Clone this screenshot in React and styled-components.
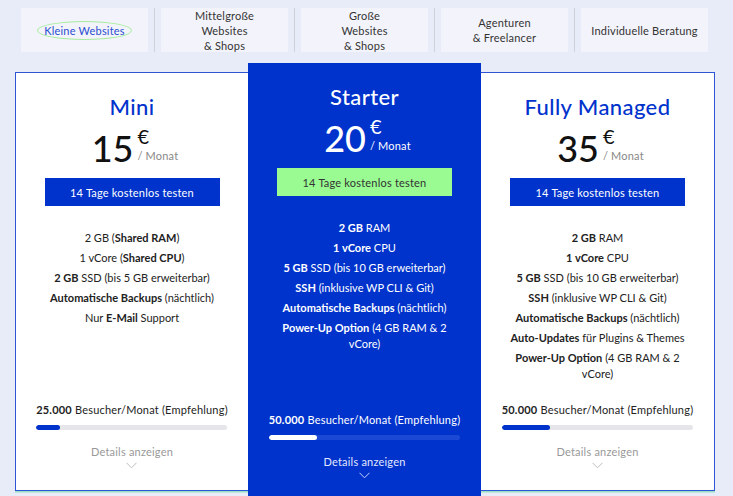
import React from "react";
import styled, { createGlobalStyle } from "styled-components";

const GlobalStyle = createGlobalStyle`
  html, body {
    margin: 0;
    padding: 0;
    background: #e8ebf8;
    font-family: Lato, "Open Sans", sans-serif;
    color: #222;
    overflow: hidden;
  }
`;

const tabs = [
  { label: ["Kleine Websites"], active: true },
  { label: ["Mittelgroße", "Websites", "& Shops"] },
  { label: ["Große", "Websites", "& Shops"] },
  { label: ["Agenturen", "& Freelancer"] },
  { label: ["Individuelle Beratung"] },
];

const plans = [
  {
    name: "Mini",
    price: "15",
    features: [
      ["2 GB ", ["(", "Shared RAM", ")"]],
      ["1 vCore ", ["(", "Shared CPU", ")"]],
      [["2 GB"], " SSD (bis 5 GB erweiterbar)"],
      [["Automatische Backups"], " (nächtlich)"],
      ["Nur ", ["E-Mail"], " Support"],
    ],
    visitors: "25.000",
    fill: 12.5,
  },
  {
    name: "Starter",
    price: "20",
    featured: true,
    features: [
      [["2 GB"], " RAM"],
      [["1 vCore"], " CPU"],
      [["5 GB"], " SSD (bis 10 GB erweiterbar)"],
      [["SSH"], " (inklusive WP CLI & Git)"],
      [["Automatische Backups"], " (nächtlich)"],
      [["Power-Up Option"], " (4 GB RAM & 2 vCore)"],
    ],
    visitors: "50.000",
    fill: 25,
  },
  {
    name: "Fully Managed",
    price: "35",
    features: [
      [["2 GB"], " RAM"],
      [["1 vCore"], " CPU"],
      [["5 GB"], " SSD (bis 10 GB erweiterbar)"],
      [["SSH"], " (inklusive WP CLI & Git)"],
      [["Automatische Backups"], " (nächtlich)"],
      [["Auto-Updates"], " für Plugins & Themes"],
      [["Power-Up Option"], " (4 GB RAM & 2 vCore)"],
    ],
    visitors: "50.000",
    fill: 25,
  },
];

// strings are normal text, arrays are bold (a 3-array keeps its parens unbolded)
function renderFeature(parts) {
  return parts.map((p, i) => {
    if (typeof p === "string") return <span key={i}>{p}</span>;
    if (p.length === 3)
      return (
        <span key={i}>
          {p[0]}
          <b>{p[1]}</b>
          {p[2]}
        </span>
      );
    return <b key={i}>{p[0]}</b>;
  });
}

export default function App() {
  return (
    <Page>
      <GlobalStyle />
      <TabBar>
        {tabs.map((t, i) => (
          <React.Fragment key={i}>
            {i > 0 && <TabDivider />}
            <Tab>
              <TabLabel active={t.active}>
                {t.label.map((l, j) => (
                  <span key={j}>{l}</span>
                ))}
              </TabLabel>
            </Tab>
          </React.Fragment>
        ))}
      </TabBar>

      <PlanBox>
        {plans.map((p) => (
          <Plan key={p.name} featured={p.featured}>
            <PlanName featured={p.featured}>{p.name}</PlanName>
            <PriceRow>
              <Amount featured={p.featured}>{p.price}</Amount>
              <PriceSide>
                <Euro featured={p.featured}>€</Euro>
                <PerMonth featured={p.featured}>/ Monat</PerMonth>
              </PriceSide>
            </PriceRow>
            <TrialButton featured={p.featured}>14 Tage kostenlos testen</TrialButton>
            <Features featured={p.featured}>
              {p.features.map((f, i) => (
                <li key={i}>{renderFeature(f)}</li>
              ))}
            </Features>
            <Footer>
              <Visitors featured={p.featured}>
                <b>{p.visitors}</b> Besucher/Monat (Empfehlung)
              </Visitors>
              <Track featured={p.featured}>
                <Fill featured={p.featured} style={{ width: `${p.fill}%` }} />
              </Track>
              <Details featured={p.featured}>Details anzeigen</Details>
              <Chevron width="11" height="7" viewBox="0 0 11 7" featured={p.featured}>
                <path d="M0.5 0.8 L5.5 5.8 L10.5 0.8" fill="none" strokeWidth="1" />
              </Chevron>
            </Footer>
          </Plan>
        ))}
      </PlanBox>
    </Page>
  );
}

const Page = styled.div`
  width: 733px;
  height: 496px;
  overflow: hidden;
`;

const TabBar = styled.div`
  display: flex;
  align-items: stretch;
  gap: 6px;
  padding: 8px 0 0 21px;
  height: 44px;
`;

const Tab = styled.div`
  width: 127px;
  background: #f3f4fb;
  display: flex;
  align-items: center;
  justify-content: center;
`;

const TabDivider = styled.div`
  width: 1px;
  background: #cfd1d9;
`;

const TabLabel = styled.div`
  display: flex;
  flex-direction: column;
  align-items: center;
  font-size: 11px;
  line-height: 15px;
  letter-spacing: 0.2px;
  color: ${(p) => (p.active ? "#2a4fd0" : "#333")};
  padding: ${(p) => (p.active ? "1px 6px" : "0")};
  border: ${(p) => (p.active ? "1.5px solid #a6ec9e" : "none")};
  border-radius: 50%;
`;

const PlanBox = styled.div`
  margin: 20px 0 0 15px;
  width: 698px;
  height: 417px;
  background: #fff;
  border: 1.5px solid #2e56d4;
  box-shadow: 0 1.5px 0 #9ee0c6;
  display: grid;
  grid-template-columns: 232px 233px 233px;
`;

const Plan = styled.div`
  display: flex;
  flex-direction: column;
  align-items: center;
  background: ${(p) => (p.featured ? "#0033cc" : "transparent")};
  margin: ${(p) => (p.featured ? "-10px 0 -10px" : "0")};
  padding: 21px 0 21px;
  color: ${(p) => (p.featured ? "#fff" : "#222")};
`;

const PlanName = styled.h2`
  margin: 0;
  font-size: 22px;
  line-height: 26px;
  font-weight: 500;
  letter-spacing: 0.4px;
  color: ${(p) => (p.featured ? "#fff" : "#0033cc")};
`;

const PriceRow = styled.div`
  display: flex;
  align-items: stretch;
  margin-top: 8px;
  height: 40px;
  padding-left: 6px;
`;

const Amount = styled.span`
  font-size: 36px;
  line-height: 40px;
  font-weight: 500;
  color: ${(p) => (p.featured ? "#fff" : "#111")};
`;

const PriceSide = styled.div`
  display: flex;
  flex-direction: column;
  justify-content: space-between;
  margin-left: 4px;
  padding: 0 0 6px;
`;

const Euro = styled.span`
  font-size: 20px;
  line-height: 16px;
  color: ${(p) => (p.featured ? "#fff" : "#111")};
`;

const PerMonth = styled.span`
  font-size: 11px;
  line-height: 12px;
  letter-spacing: 0.2px;
  color: ${(p) => (p.featured ? "#fff" : "#888")};
`;

const TrialButton = styled.button`
  margin-top: 10px;
  width: 175px;
  height: 28px;
  border: none;
  font-family: inherit;
  font-size: 11px;
  letter-spacing: 0.2px;
  background: ${(p) => (p.featured ? "#99fb91" : "#0033cc")};
  color: ${(p) => (p.featured ? "#333" : "#fff")};
  cursor: pointer;
`;

const Features = styled.ul`
  list-style: none;
  margin: 24px 0 0;
  padding: 0;
  width: 190px;
  text-align: center;
  font-size: 11px;
  line-height: 16px;
  display: flex;
  flex-direction: column;
  gap: 4px;
  color: ${(p) => (p.featured ? "#fff" : "#222")};

  b {
    font-weight: 700;
  }
`;

const Footer = styled.div`
  margin-top: auto;
  display: flex;
  flex-direction: column;
  align-items: center;
`;

const Visitors = styled.div`
  font-size: 11px;
  line-height: 16px;
  letter-spacing: 0.2px;
  color: ${(p) => (p.featured ? "#fff" : "#222")};
`;

const Track = styled.div`
  margin-top: 7px;
  width: 191px;
  height: 5px;
  border-radius: 3px;
  background: ${(p) => (p.featured ? "#1c48d6" : "#e6e6ea")};
  overflow: hidden;
`;

const Fill = styled.div`
  height: 100%;
  border-radius: 3px;
  background: ${(p) => (p.featured ? "#fff" : "#0033cc")};
`;

const Details = styled.div`
  margin-top: 15px;
  font-size: 11px;
  line-height: 14px;
  letter-spacing: 0.2px;
  color: ${(p) => (p.featured ? "#e3e8ff" : "#999")};
`;

const Chevron = styled.svg`
  margin-top: 3px;
  stroke: ${(p) => (p.featured ? "#c9d3ff" : "#bdbdbd")};
`;
